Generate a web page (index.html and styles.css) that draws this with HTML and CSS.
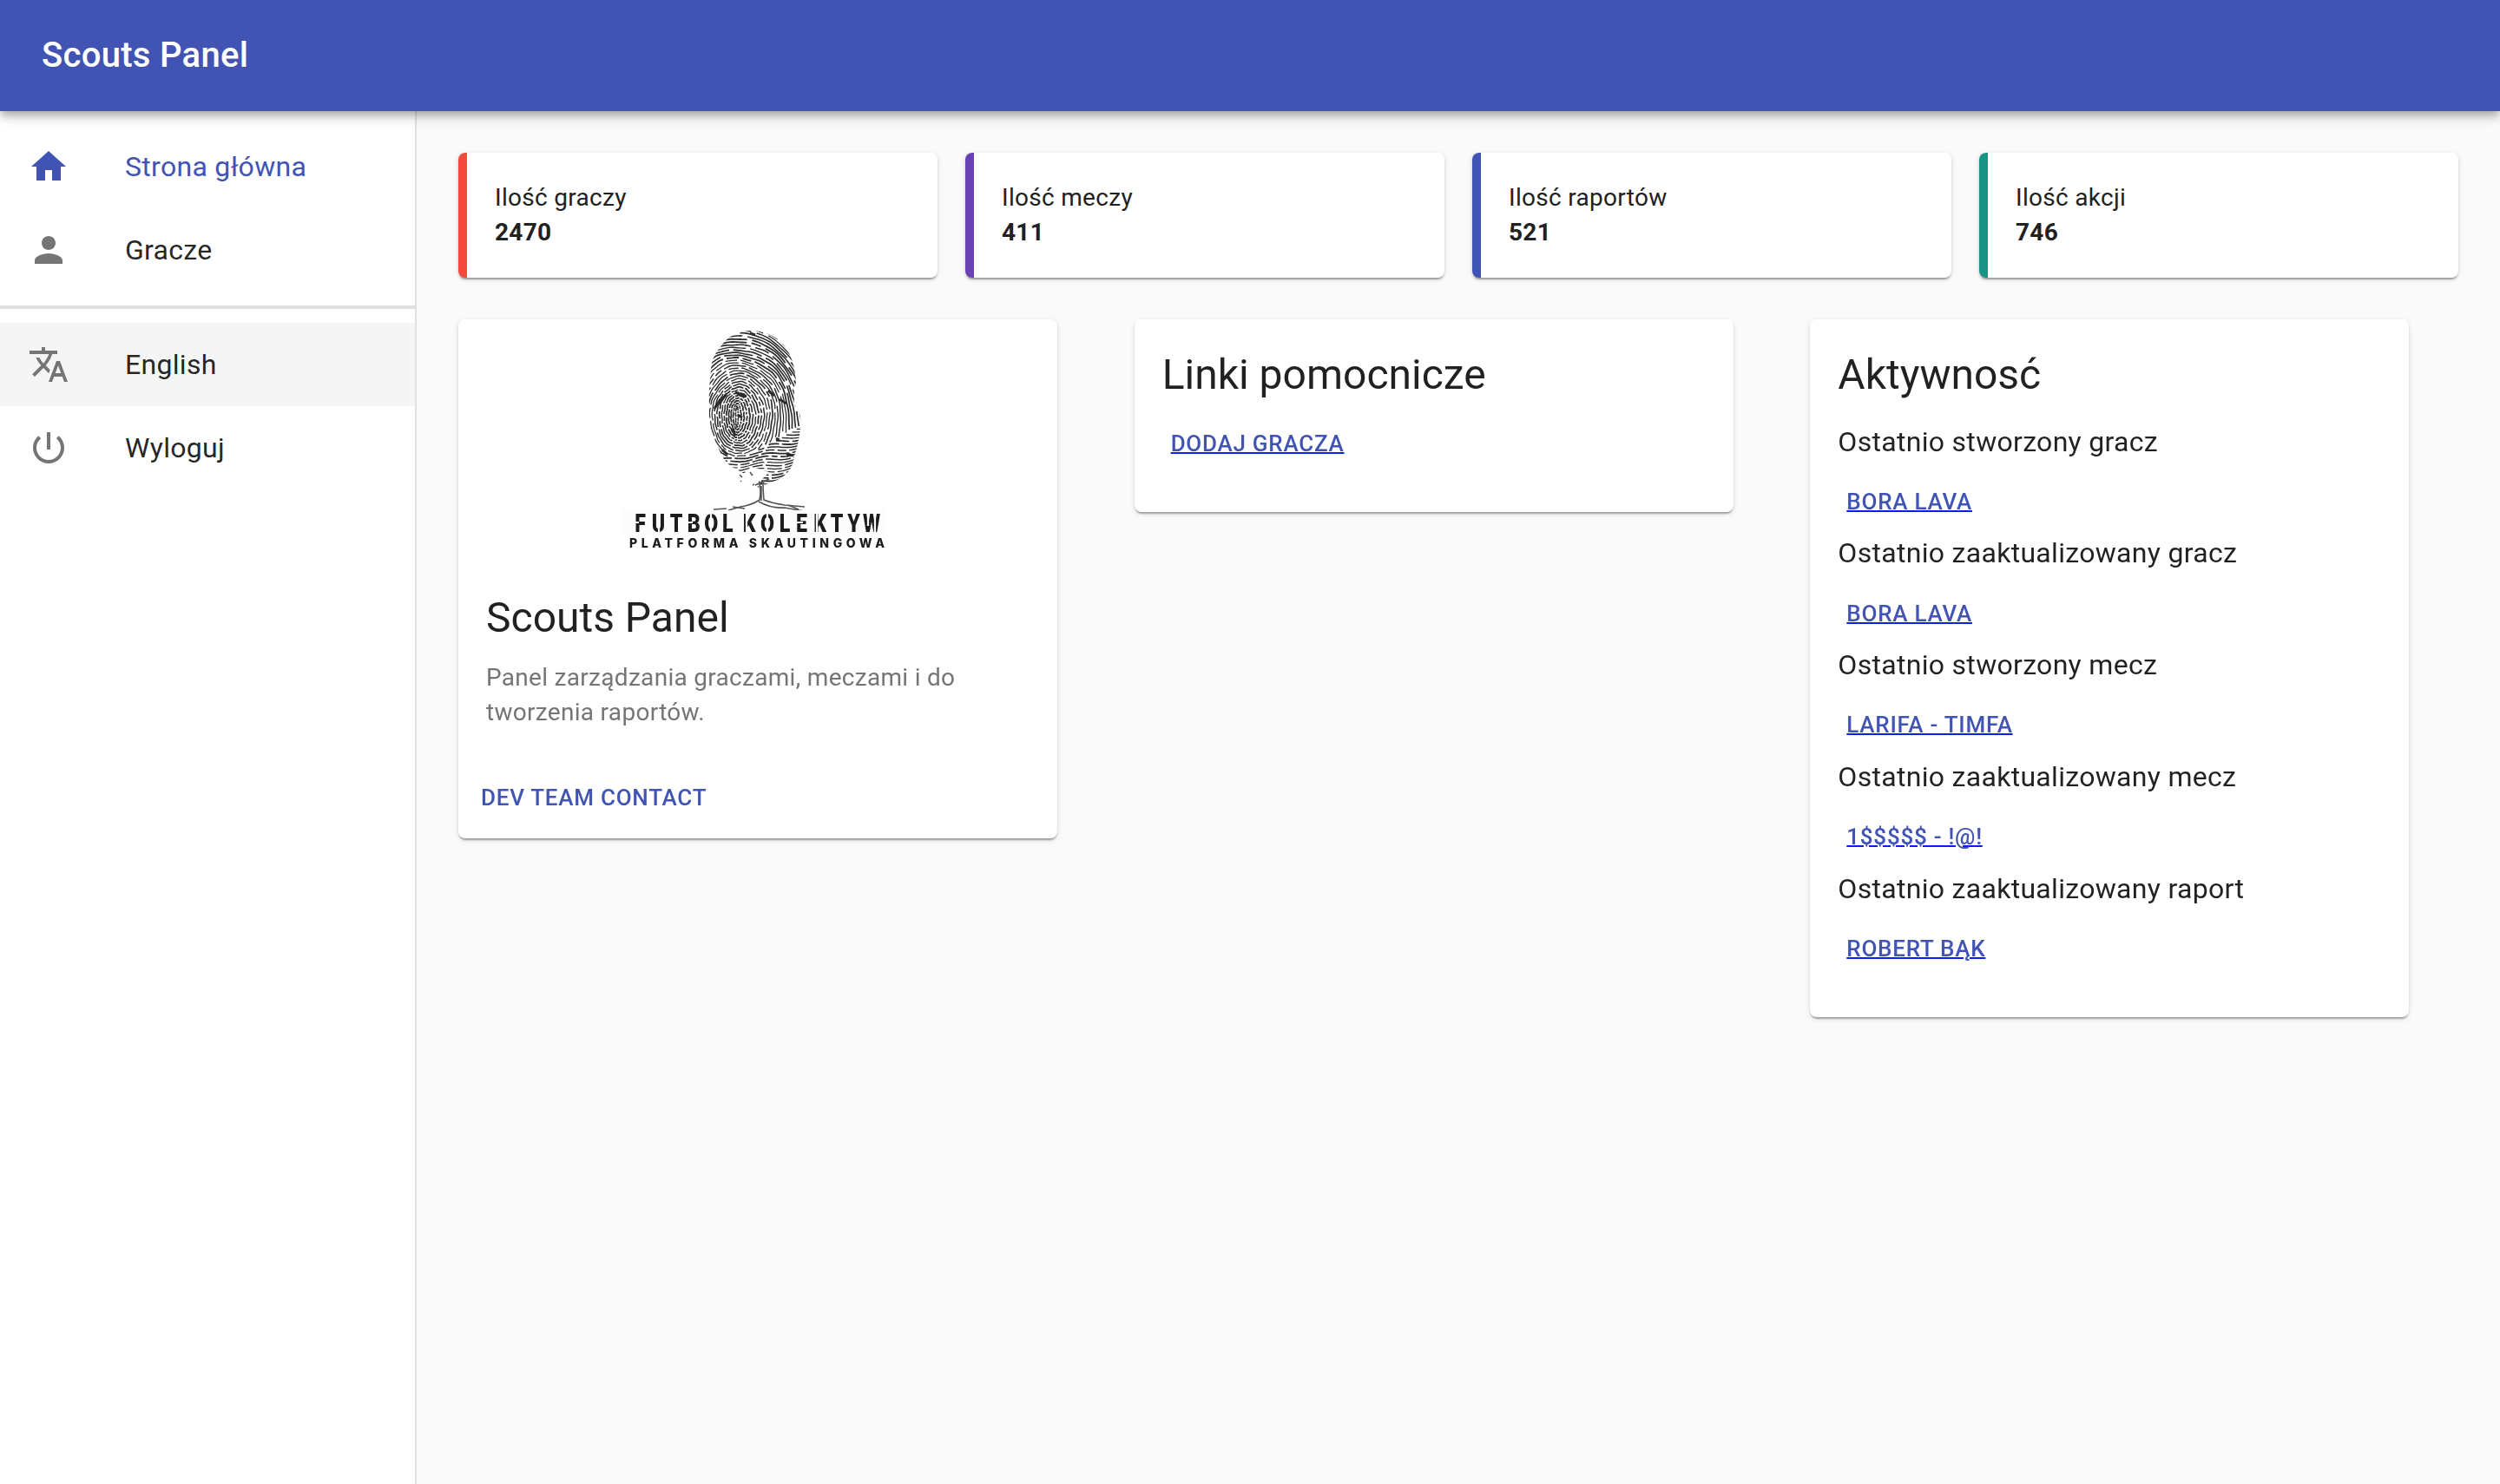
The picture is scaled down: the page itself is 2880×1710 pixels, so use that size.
FILE: index.html
```html
<!DOCTYPE html>
<html lang="pl">
<head>
  <meta charset="utf-8">
  <title>Scouts Panel</title>
  <link rel="stylesheet" href="styles.css">
</head>
<body>
  <header class="app-bar"><h1 class="app-title">Scouts Panel</h1></header>
  <div class="layout">
    <nav class="drawer">
      <ul class="nav-list">
        <li class="nav-item nav-item-active">
          <svg class="icon" viewBox="0 0 24 24"><path d="M10 20v-6h4v6h5v-8h3L12 3 2 12h3v8z"/></svg>
          <span>Strona główna</span>
        </li>
        <li class="nav-item">
          <svg class="icon" viewBox="0 0 24 24"><path d="M12 12c2.21 0 4-1.79 4-4s-1.79-4-4-4-4 1.79-4 4 1.79 4 4 4zm0 2c-2.67 0-8 1.34-8 4v2h16v-2c0-2.66-5.33-4-8-4z"/></svg>
          <span>Gracze</span>
        </li>
      </ul>
      <hr class="divider">
      <ul class="nav-list">
        <li class="nav-item nav-item-hover">
          <svg class="icon" viewBox="0 0 24 24"><path d="M12.87 15.07l-2.54-2.51.03-.03c1.74-1.94 2.98-4.17 3.71-6.53H17V4h-7V2H8v2H1v1.99h11.17C11.5 7.92 10.44 9.75 9 11.35 8.07 10.32 7.3 9.19 6.69 8h-2c.73 1.63 1.73 3.17 2.98 4.56l-5.09 5.02L4 19l5-5 3.11 3.11.76-2.04zM18.5 10h-2L12 22h2l1.12-3h4.75L21 22h2l-4.5-12zm-2.62 7l1.62-4.33L19.12 17h-3.24z"/></svg>
          <span>English</span>
        </li>
        <li class="nav-item">
          <svg class="icon" viewBox="0 0 24 24"><path d="M13 3h-2v10h2V3zm4.83 2.17l-1.42 1.42C17.99 7.86 19 9.81 19 12c0 3.87-3.13 7-7 7s-7-3.13-7-7c0-2.19 1.01-4.14 2.58-5.42L6.17 5.17C4.23 6.82 3 9.26 3 12c0 4.97 4.03 9 9 9s9-4.03 9-9c0-2.74-1.23-5.18-3.17-6.83z"/></svg>
          <span>Wyloguj</span>
        </li>
      </ul>
    </nav>
    <main class="content">
      <section class="stats">
        <div class="card stat stat-red"><span>Ilość graczy</span><strong>2470</strong></div>
        <div class="card stat stat-purple"><span>Ilość meczy</span><strong>411</strong></div>
        <div class="card stat stat-indigo"><span>Ilość raportów</span><strong>521</strong></div>
        <div class="card stat stat-teal"><span>Ilość akcji</span><strong>746</strong></div>
      </section>
      <section class="panels">
        <article class="card panel">
          <svg class="logo" viewBox="0 0 690 280">
            <defs>
              <clipPath id="print-shape">
                <path d="M340 13C358 14 371 23 378 34C386 46 388 60 389 72Q386 84 387 98Q396 108 394 124C393 138 390 148 387 158C386 172 376 183 362 187L345 194L344 190L358 176L338 170L330 178L317 171C308 166 302 156 299 146C291 134 288 116 289 98C288 84 290 70 291 58C291 46 298 36 304 29C312 18 326 12 340 13Z"/>
              </clipPath>
            </defs>
            <g class="artwork">
              <g id="ridges" class="ridges" clip-path="url(#print-shape)"></g>
              <g class="trunk">
                <path d="M347 189Q349 199 347 208Q338 214 325 216L311 220M351 188Q351 199 352 208Q362 212 376 214L399 216M346 210Q360 218 376 217L398 221M294 219L309 218M349 192V209"/>
                <path d="M342 191L358 184M346 187L354 190M316 216L330 218M380 214L392 219"/>
                <path d="M324 179L327 182M336 176L339 180M325 186L326 187M339 191L341 190"/>
              </g>
              <rect class="logo-band" x="189" y="220" width="302" height="29"/>
              <text class="logo-name" transform="scale(.8 1)" x="262 288 314 339 364 388 404 419 445 470 494.500 521 545 569.500 595" y="245.300">FUTBOL KOLEKTYW</text>
              <path class="stencil-cuts" d="M231 238V248M291 221V248M356 221V248M332 222V247M413 222V247M202 234H208M390 234H397M309 240H313M375 240H378M472 222V238M480 230V247M262 234H270"/>
              <text class="logo-tagline" x="197" y="263" textLength="294">PLATFORMA SKAUTINGOWA</text>
            </g>
          </svg>
          <div class="panel-body">
            <h2 class="heading">Scouts Panel</h2>
            <p class="description">Panel zarządzania graczami, meczami i do tworzenia raportów.</p>
          </div>
          <div class="actions"><a class="button">Dev team contact</a></div>
        </article>
        <article class="card panel panel-body panel-last">
          <h2 class="heading">Linki pomocnicze</h2>
          <a class="button button-link">Dodaj gracza</a>
        </article>
        <article class="card panel panel-body panel-last">
          <h2 class="heading">Aktywnosć</h2>
          <h3 class="subtitle">Ostatnio stworzony gracz</h3>
          <a class="button button-link">Bora Lava</a>
          <h3 class="subtitle">Ostatnio zaaktualizowany gracz</h3>
          <a class="button button-link">Bora Lava</a>
          <h3 class="subtitle">Ostatnio stworzony mecz</h3>
          <a class="button button-link">Larifa - Timfa</a>
          <h3 class="subtitle">Ostatnio zaaktualizowany mecz</h3>
          <a class="button button-link">1$$$$$ - !@!</a>
          <h3 class="subtitle">Ostatnio zaaktualizowany raport</h3>
          <a class="button button-link">Robert Bąk</a>
        </article>
      </section>
    </main>
  </div>
  <script src="logo.js"></script>
</body>
</html>
```
FILE: logo.js
```js
// Draws the fingerprint ridges: tall loops round the core, flat waves below it.
(function () {
  var group = document.getElementById('ridges');
  var seed = 11;
  function random() {
    seed = (seed * 16807) % 2147483647;
    return seed / 2147483647;
  }
  function addPath(d, width) {
    var path = document.createElementNS('http://www.w3.org/2000/svg', 'path');
    path.setAttribute('d', d);
    path.setAttribute('stroke-width', width);
    group.appendChild(path);
  }
  // Joins points into dashes of random length, skipping those outside the zone.
  function trace(points, inZone) {
    var d = '';
    var pen = false;
    var run = 3 + random() * 18;
    points.forEach(function (p) {
      if (run <= 0 || !inZone(p)) {
        pen = false;
        if (run <= 0) run = 4 + random() * 20;
        return;
      }
      d += (pen ? 'L' : 'M') + p[0].toFixed(1) + ' ' + p[1].toFixed(1);
      pen = true;
      run--;
    });
    if (d) addPath(d, (1.2 + random() * 0.6).toFixed(2));
  }
  function floor(x) {
    return x < 330 ? 158 : 158 - (x - 330) * 0.55;
  }
  var k, i, points;
  for (k = 0; k < 36; k++) {
    points = [];
    var phase = random() * 6;
    for (i = 0; i <= 170; i++) {
      var a = (i / 170) * Math.PI * 2;
      var wave = Math.sin(a * 5 + k * 0.3) * Math.min(1.2, k * 0.06) + Math.sin(a * 17 + phase) * 0.3;
      points.push([
        321 + k * 0.3 + (1.5 + k * 3 + wave) * Math.cos(a),
        112 + (12 + k * 3.1 + wave) * Math.sin(a) + (k > 12 ? (k - 12) * 0.9 * Math.cos(a) : 0)
      ]);
    }
    trace(points, function (p) { return p[1] < floor(p[0]); });
  }
  for (k = 0; k < 26; k++) {
    points = [];
    for (i = 0; i < 60; i++) {
      var x = 298 + i * 1.7;
      points.push([x, 124 + k * 3.3 - (x - 345) * 0.12 + Math.sin(x * 0.13 + k * 0.25) * 1.5]);
    }
    trace(points, function (p) { return p[1] > floor(p[0]) + 1; });
  }
  // Darker ink blotches on the left side and around the core.
  addPath('M295 103L302 92M298 99L309 86M322 110L327 113M316 126L319 134M304 150L310 156M319 84L332 89M357 82L364 88M366 137L370 139M378 155L386 157M370 92L378 97M336 16L342 18', 3);
})();
```
FILE: styles.css
```css
* { box-sizing: border-box; }
body {
  margin: 0;
  height: 1710px;
  display: flex;
  flex-direction: column;
  overflow: hidden;
  background: #fafafa;
  color: rgba(0, 0, 0, .87);
  font-family: Roboto, "Liberation Sans", sans-serif;
  font-size: 28px;
  line-height: 40px;
  letter-spacing: .01071em;
}
h1, h2, h3, p, ul { margin: 0; padding: 0; font-weight: 400; }
.app-bar {
  position: relative;
  z-index: 1;
  flex: none;
  height: 128px;
  display: flex;
  align-items: center;
  padding: 0 48px;
  background: #4154b3;
  color: #fff;
  box-shadow: 0 4px 8px -2px rgba(0, 0, 0, .2), 0 8px 10px rgba(0, 0, 0, .14), 0 2px 20px rgba(0, 0, 0, .12);
}
.app-title { font-size: 40px; font-weight: 500; line-height: 64px; letter-spacing: .0075em; }
.layout { flex: 1; display: flex; }
.drawer { flex: none; width: 480px; background: #fff; border-right: 2px solid #e0e0e0; }
.nav-list { list-style: none; padding: 16px 0; }
.nav-item {
  height: 96px;
  display: flex;
  align-items: center;
  gap: 64px;
  padding: 0 32px;
  font-size: 32px;
  line-height: 48px;
  letter-spacing: .00938em;
}
.nav-item-active, .nav-item-active .icon { color: #4154b3; }
.nav-item-hover { background: #f5f5f5; }
.icon { width: 48px; height: 48px; fill: currentColor; color: #757575; }
.divider { margin: 0; height: 4px; border: 0; background: #e0e0e0; }
.content { flex: 1; padding: 48px; }
.stats { display: grid; grid-template-columns: repeat(4, 1fr); gap: 32px; margin-bottom: 48px; }
.card {
  background: #fff;
  border-radius: 8px;
  box-shadow: 0 4px 2px -2px rgba(0, 0, 0, .2), 0 2px 2px rgba(0, 0, 0, .14), 0 2px 6px rgba(0, 0, 0, .12);
}
.stat { display: flex; flex-direction: column; padding: 32px; border-left: 10px solid; }
.stat span, .stat strong { color: #212121; }
.stat-red { border-color: #f44740; }
.stat-purple { border-color: #6841b3; }
.stat-indigo { border-color: #4154b3; }
.stat-teal { border-color: #1a9585; }
.panels { display: grid; grid-template-columns: repeat(3, 1fr); gap: 32px; align-items: start; }
.panel { width: 690px; }
.panel-body { padding: 32px; }
.panel-last { padding-bottom: 48px; }
.heading { margin-bottom: 16.8px; font-size: 48px; line-height: 64px; letter-spacing: 0; }
.description { color: #757575; }
.subtitle { margin-bottom: 11.2px; font-size: 32px; line-height: 56px; letter-spacing: .00938em; }
.actions { padding: 16px; }
.button {
  display: block;
  width: fit-content;
  padding: 8px 10px;
  color: #4154b3;
  font-size: 26px;
  font-weight: 500;
  line-height: 45.5px;
  letter-spacing: .02857em;
  text-transform: uppercase;
}
.button-link { text-decoration: underline #0b1df0 2px; }
.logo { display: block; width: 690px; height: 280px; }
.artwork { filter: blur(.5px); }
.ridges { fill: none; stroke: #2c2c2c; }
.trunk { fill: none; stroke: #555; stroke-width: 1.6; }
.logo-band { fill: #fcfcfc; }
.logo-name { fill: #1c1c1c; font-size: 29px; font-weight: 900; letter-spacing: 0; text-anchor: middle; }
.stencil-cuts { stroke: #fcfcfc; stroke-width: 2.2; }
.logo-tagline { fill: #1c1c1c; font-family: Inter, sans-serif; font-size: 14px; font-weight: 800; letter-spacing: 0; }
```
